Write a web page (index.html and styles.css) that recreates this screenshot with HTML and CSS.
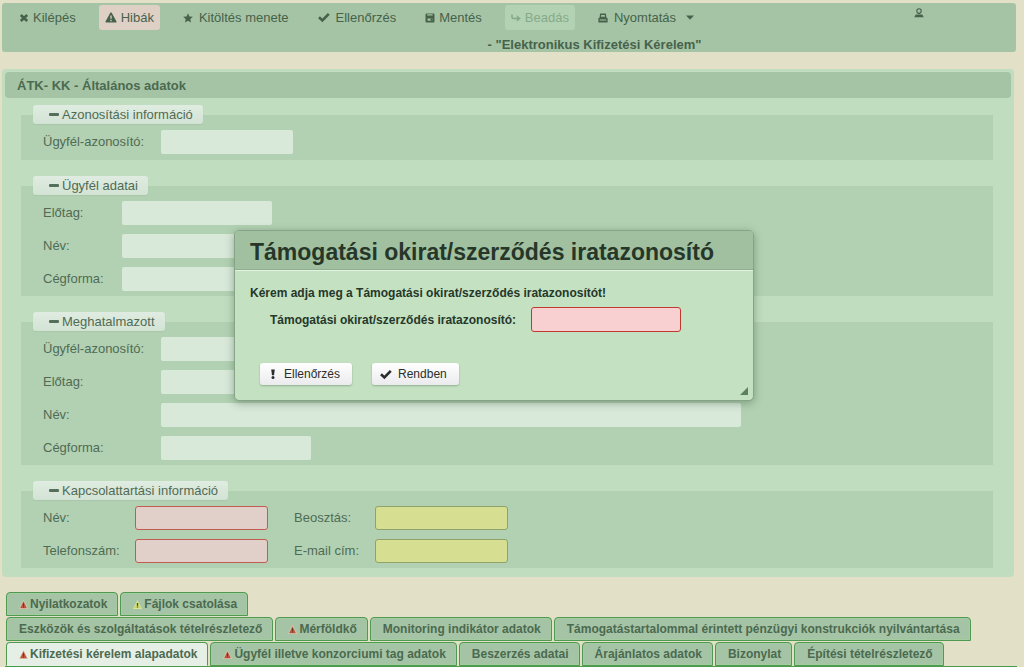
FILE: index.html
```html
<!DOCTYPE html>
<html lang="hu">
<head>
<meta charset="utf-8">
<meta name="viewport" content="width=device-width, initial-scale=1">
<title>Elektronikus Kifizetési Kérelem</title>
<link rel="stylesheet" href="styles.css">
</head>
<body>
<svg class="defs" aria-hidden="true">
  <symbol id="i-check" viewBox="0 0 12 10"><path d="M1 4.8 4.4 8 10.8 1.4" fill="none" stroke="currentColor" stroke-width="2.6"/></symbol>
  <symbol id="i-tri" viewBox="0 0 9 9"><path d="M4.5 0 9 9H0z" fill="#e3cbb0"/><path d="M4.5 1.2 7.9 8.2H1.1z" fill="#b95540"/><path d="M4.5 3.4v2.4M4.5 6.5v1" stroke="#5d3328" stroke-width="1"/></symbol>
  <symbol id="i-tri-y" viewBox="0 0 9 9"><path d="M4.5 0 9 9H0z" fill="#dfe9a4"/><path d="M4.5 1.2 7.9 8.2H1.1z" fill="#c9d765"/><path d="M4.5 3v2.8M4.5 6.5v1" stroke="#3f4a2c" stroke-width="1.2"/></symbol>
</svg>

<header class="toolbar">
  <nav class="menu" aria-label="Eszköztár">
    <button type="button" class="item"><svg class="icon" viewBox="0 0 10 10"><path d="M1.8 2 8.2 8M8.2 2 1.8 8" stroke="currentColor" stroke-width="2.6"/></svg>Kilépés</button>
    <button type="button" class="item item-error"><svg class="icon icon-lg" viewBox="0 0 12 11"><path d="M6 1.2 10.8 9.8H1.2z" fill="currentColor" stroke="currentColor" stroke-width="1.6" stroke-linejoin="round"/><path d="M6 3.6v3.2M6 7.8v1.4" stroke="#dfd0c5" stroke-width="1.3"/></svg>Hibák</button>
    <button type="button" class="item item-wide"><svg class="icon" viewBox="0 0 10 10"><path d="M5 .2 6.4 3.4 9.9 3.8 7.3 6.1 8 9.6 5 7.8 2 9.6 2.7 6.1.1 3.8 3.6 3.4z" fill="currentColor"/></svg>Kitöltés menete</button>
    <button type="button" class="item item-wide"><svg class="icon icon-lg"><use href="#i-check"/></svg>Ellenőrzés</button>
    <button type="button" class="item"><svg class="icon" viewBox="0 0 10 10"><path d="M.5 1.5a1 1 0 0 1 1-1h7a1 1 0 0 1 1 1v7a1 1 0 0 1-1 1h-7a1 1 0 0 1-1-1z" fill="currentColor"/><path d="M2.2 1.2h5.4v1.4H2.2zM2.6 5.4h4.8v2.4H2.6z" fill="#a5c4a5"/><path d="M5.6 5.4h1.8v2.4H5.6z" fill="currentColor"/></svg>Mentés</button>
    <button type="button" class="item item-off" disabled><svg class="icon" viewBox="0 0 10 10"><path d="M1 1.5V4q0 1.5 1.5 1.5H7" fill="none" stroke="currentColor" stroke-width="1.6"/><path d="M5.8 2.2 9.8 5.5 5.8 8.8z" fill="currentColor"/></svg>Beadás</button>
    <button type="button" class="item item-wide"><svg class="icon" viewBox="0 0 10 10"><path d="M2.2.6h5.6L8.6 5H9.6V9.4H.4V5H1.4z" fill="currentColor"/><path d="M3.2 2h3.6l.2 1.8H3zM1.8 6.6h6.4v.9H1.8z" fill="#a5c4a5"/></svg>Nyomtatás<svg class="caret" viewBox="0 0 8 5"><path d="M0 .5h8L4 4.8z" fill="currentColor"/></svg></button>
    <button type="button" class="user" aria-label="Felhasználó"><svg class="icon" viewBox="0 0 10 10"><circle cx="5" cy="3" r="2.2" fill="none" stroke="currentColor" stroke-width="1.1"/><path d="M3.8 5h2.4v1H3.8zM.2 9.2 1.8 6.6h6.4l1.6 2.6z" fill="currentColor"/></svg></button>
  </nav>
  <p class="doc-title">- "Elektronikus Kifizetési Kérelem"</p>
</header>

<main class="panel">
  <h2 class="panel-head">ÁTK- KK - Általános adatok</h2>
  <form class="sections">
    <fieldset class="group">
      <legend><i class="minus"></i>Azonosítási információ</legend>
      <div class="fields cols-a"><label for="a1">Ügyfél-azonosító:</label><input id="a1" class="w-s"></div>
    </fieldset>
    <fieldset class="group">
      <legend><i class="minus"></i>Ügyfél adatai</legend>
      <div class="fields cols-b">
        <label for="b1">Előtag:</label><input id="b1" class="w-m">
        <label for="b2">Név:</label><input id="b2" class="w-l">
        <label for="b3">Cégforma:</label><input id="b3" class="w-m">
      </div>
    </fieldset>
    <fieldset class="group">
      <legend><i class="minus"></i>Meghatalmazott</legend>
      <div class="fields cols-a">
        <label for="c1">Ügyfél-azonosító:</label><input id="c1" class="w-s">
        <label for="c2">Előtag:</label><input id="c2" class="w-m">
        <label for="c3">Név:</label><input id="c3" class="w-l">
        <label for="c4">Cégforma:</label><input id="c4" class="w-m">
      </div>
    </fieldset>
    <fieldset class="group">
      <legend><i class="minus"></i>Kapcsolattartási információ</legend>
      <div class="fields cols-c">
        <label for="d1">Név:</label><input id="d1" class="required">
        <label for="d2">Beosztás:</label><input id="d2" class="warn">
        <label for="d3">Telefonszám:</label><input id="d3" class="required">
        <label for="d4">E-mail cím:</label><input id="d4" class="warn">
      </div>
    </fieldset>
  </form>
</main>

<nav class="tabs" aria-label="Lapok">
  <div class="tab-row">
    <a class="tab" href="#"><svg class="mark"><use href="#i-tri"/></svg>Nyilatkozatok</a>
    <a class="tab" href="#"><svg class="mark"><use href="#i-tri-y"/></svg>Fájlok csatolása</a>
  </div>
  <div class="tab-row">
    <a class="tab" href="#">Eszközök és szolgáltatások tételrészletező</a>
    <a class="tab" href="#"><svg class="mark"><use href="#i-tri"/></svg>Mérföldkő</a>
    <a class="tab" href="#">Monitoring indikátor adatok</a>
    <a class="tab" href="#">Támogatástartalommal érintett pénzügyi konstrukciók nyilvántartása</a>
  </div>
  <div class="tab-row">
    <a class="tab active" href="#" aria-current="page"><svg class="mark"><use href="#i-tri"/></svg>Kifizetési kérelem alapadatok</a>
    <a class="tab" href="#"><svg class="mark"><use href="#i-tri"/></svg>Ügyfél illetve konzorciumi tag adatok</a>
    <a class="tab" href="#">Beszerzés adatai</a>
    <a class="tab" href="#">Árajánlatos adatok</a>
    <a class="tab" href="#">Bizonylat</a>
    <a class="tab" href="#">Építési tételrészletező</a>
  </div>
</nav>

<section class="dialog" role="dialog" aria-labelledby="dlg-title">
  <h1 class="dialog-head" id="dlg-title">Támogatási okirat/szerződés iratazonosító</h1>
  <div class="dialog-body">
    <p class="prompt">Kérem adja meg a Támogatási okirat/szerződés iratazonosítót!</p>
    <div class="dialog-field"><label for="doc">Támogatási okirat/szerződés iratazonosító:</label><input id="doc"></div>
    <div class="dialog-actions">
      <button type="button" class="btn"><svg class="icon" viewBox="0 0 10 10"><path d="M3.2.6h3.6L6 6.2H4z" fill="currentColor"/><circle cx="5" cy="8.4" r="1.5" fill="currentColor"/></svg>Ellenőrzés</button>
      <button type="button" class="btn"><svg class="icon-lg"><use href="#i-check"/></svg>Rendben</button>
    </div>
  </div>
  <svg class="grip" viewBox="0 0 8 8" aria-hidden="true"><path d="M8 0V8H0z" fill="#5d8062"/></svg>
</section>
</body>
</html>
```

FILE: styles.css
```css
* { box-sizing: border-box; }

body {
  margin: 0;
  padding: 3px 8px 0 2px;
  min-height: 100vh;
  overflow: hidden;
  position: relative;
  background: #e3e0c8;
  color: #506b54;
  font-family: "Liberation Sans", Arial, sans-serif;
  font-size: 13px;
  line-height: 16px;
}

h1, h2, p { margin: 0; }
button, input { font: inherit; color: inherit; }
button { border: 0; background: none; padding: 0; cursor: pointer; }
.defs { position: absolute; width: 0; height: 0; }

.icon { width: 10px; height: 10px; flex: none; }
.icon-lg { width: 12px; height: 11px; flex: none; }

/* Toolbar */
.toolbar { background: #a5c4a5; border-radius: 3px; padding: 2px 12px 0 11px; height: 49px; }
.menu { display: flex; align-items: center; gap: 17px; color: #47624b; }
.item { display: flex; align-items: center; gap: 4px; height: 25px; padding: 0 6px; border-radius: 3px; white-space: nowrap; }
.item-wide { gap: 6px; }
.item-error { background: #dfd0c5; }
.item-off { background: #b3d2b4; color: #86aa89; }
.caret { width: 8px; height: 5px; margin-left: 4px; }
.user { margin-left: auto; margin-right: 80px; height: 18px; align-self: flex-start; }
.doc-title { padding: 7px 0 0 172px; font-weight: bold; text-align: center; color: #47624b; }

/* Form panel */
.panel { margin-top: 17px; padding: 3px 3px 9px; background: #c0ddc0; border-radius: 4px; margin-right: 2px; }
.panel-head { height: 26px; padding: 0 12px; background: #a5c4a5; border-radius: 4px; font-size: 13px; line-height: 28px; color: #4b6a50; }
.sections { display: flex; flex-direction: column; gap: 16px; padding: 7px 18px 0 16px; }
.group { min-width: 0; margin: 0; border: 0; padding: 6px 22px 5px; background: #b2d1b3; }
.group:first-child { padding-bottom: 6px; }
.group legend { display: flex; align-items: center; gap: 3px; height: 19px; margin-left: -10px; padding: 0 10px 0 16px; border-radius: 3px; background: linear-gradient(#e0ece1, #d2e3d4); box-shadow: 0 1px 1px #a9c6aa; }
.minus { width: 10px; height: 3px; background: #54705a; border-radius: 1px; }
.fields { display: grid; gap: 9px 0; align-items: center; }
.cols-a { grid-template-columns: 118px 1fr; }
.cols-b { grid-template-columns: 79px 1fr; }
.cols-c { grid-template-columns: 92px 159px 81px 1fr; }
.fields input { width: 132px; height: 24px; border: 0; border-radius: 2px; background: #d8e8d9; padding: 0 4px; }
.fields .w-m { width: 150px; }
.fields .w-l { width: 580px; max-width: 100%; }
.fields .required, .fields .warn { width: 133px; border-radius: 3px; }
.fields .required { border: 1px solid #c25c50; background: #e1d0c9; }
.fields .warn { border: 1px solid #8fa26a; background: #d6df91; }

/* Bottom tabs */
.tabs { display: grid; gap: 1px; margin: 15px -1px 0 3px; border-bottom: 1px solid #4c9a4c; }
.tab-row { display: flex; gap: 2px; padding-left: 1px; }
.tab { display: flex; align-items: center; gap: 2px; height: 24px; padding: 0 10px 0 12px; border: 1px solid #4f9a50; border-radius: 4px 4px 0 0; background: #a5c4a5; box-shadow: inset 0 0 0 1px #a3cda0; color: #4b6a50; font-size: 12px; font-weight: bold; text-decoration: none; white-space: nowrap; }
.active { background: #e6efe5; border-bottom-color: #e6efe5; box-shadow: none; }
.mark { width: 9px; height: 9px; flex: none; }

/* Modal window */
.dialog { position: absolute; left: 234px; top: 230px; width: 520px; border: 1px solid #86a387; border-radius: 5px; background: #c4e2c2; box-shadow: 0 2px 8px rgba(60, 90, 60, .45); color: #26372a; }
.dialog-head { height: 39px; padding: 0 15px; border-bottom: 1px solid #8fae90; border-radius: 4px 4px 0 0; background: #a0c0a0; font-size: 23px; line-height: 43px; white-space: nowrap; }
.dialog-body { padding: 14px 15px 15px; font-size: 12px; border-top: 1px solid #e3f3e1; }
.prompt, .dialog-field label { font-weight: bold; }
.dialog-field { display: grid; grid-template-columns: 261px 150px; align-items: center; margin: 6px 0 0 20px; }
.dialog-field input { height: 25px; border: 1px solid #c0392f; border-radius: 3px; background: #f8d0d1; padding: 0 4px; }
.dialog-actions { display: flex; gap: 20px; margin: 31px 0 0 10px; }
.btn { display: flex; align-items: center; gap: 6px; height: 22px; padding: 0 12px 0 8px; border-radius: 3px; background: linear-gradient(#ffffff, #ebebee); box-shadow: 0 1px 2px #8fae90; color: #2b2f2c; }
.grip { position: absolute; right: 5px; bottom: 5px; width: 8px; height: 8px; }
```
